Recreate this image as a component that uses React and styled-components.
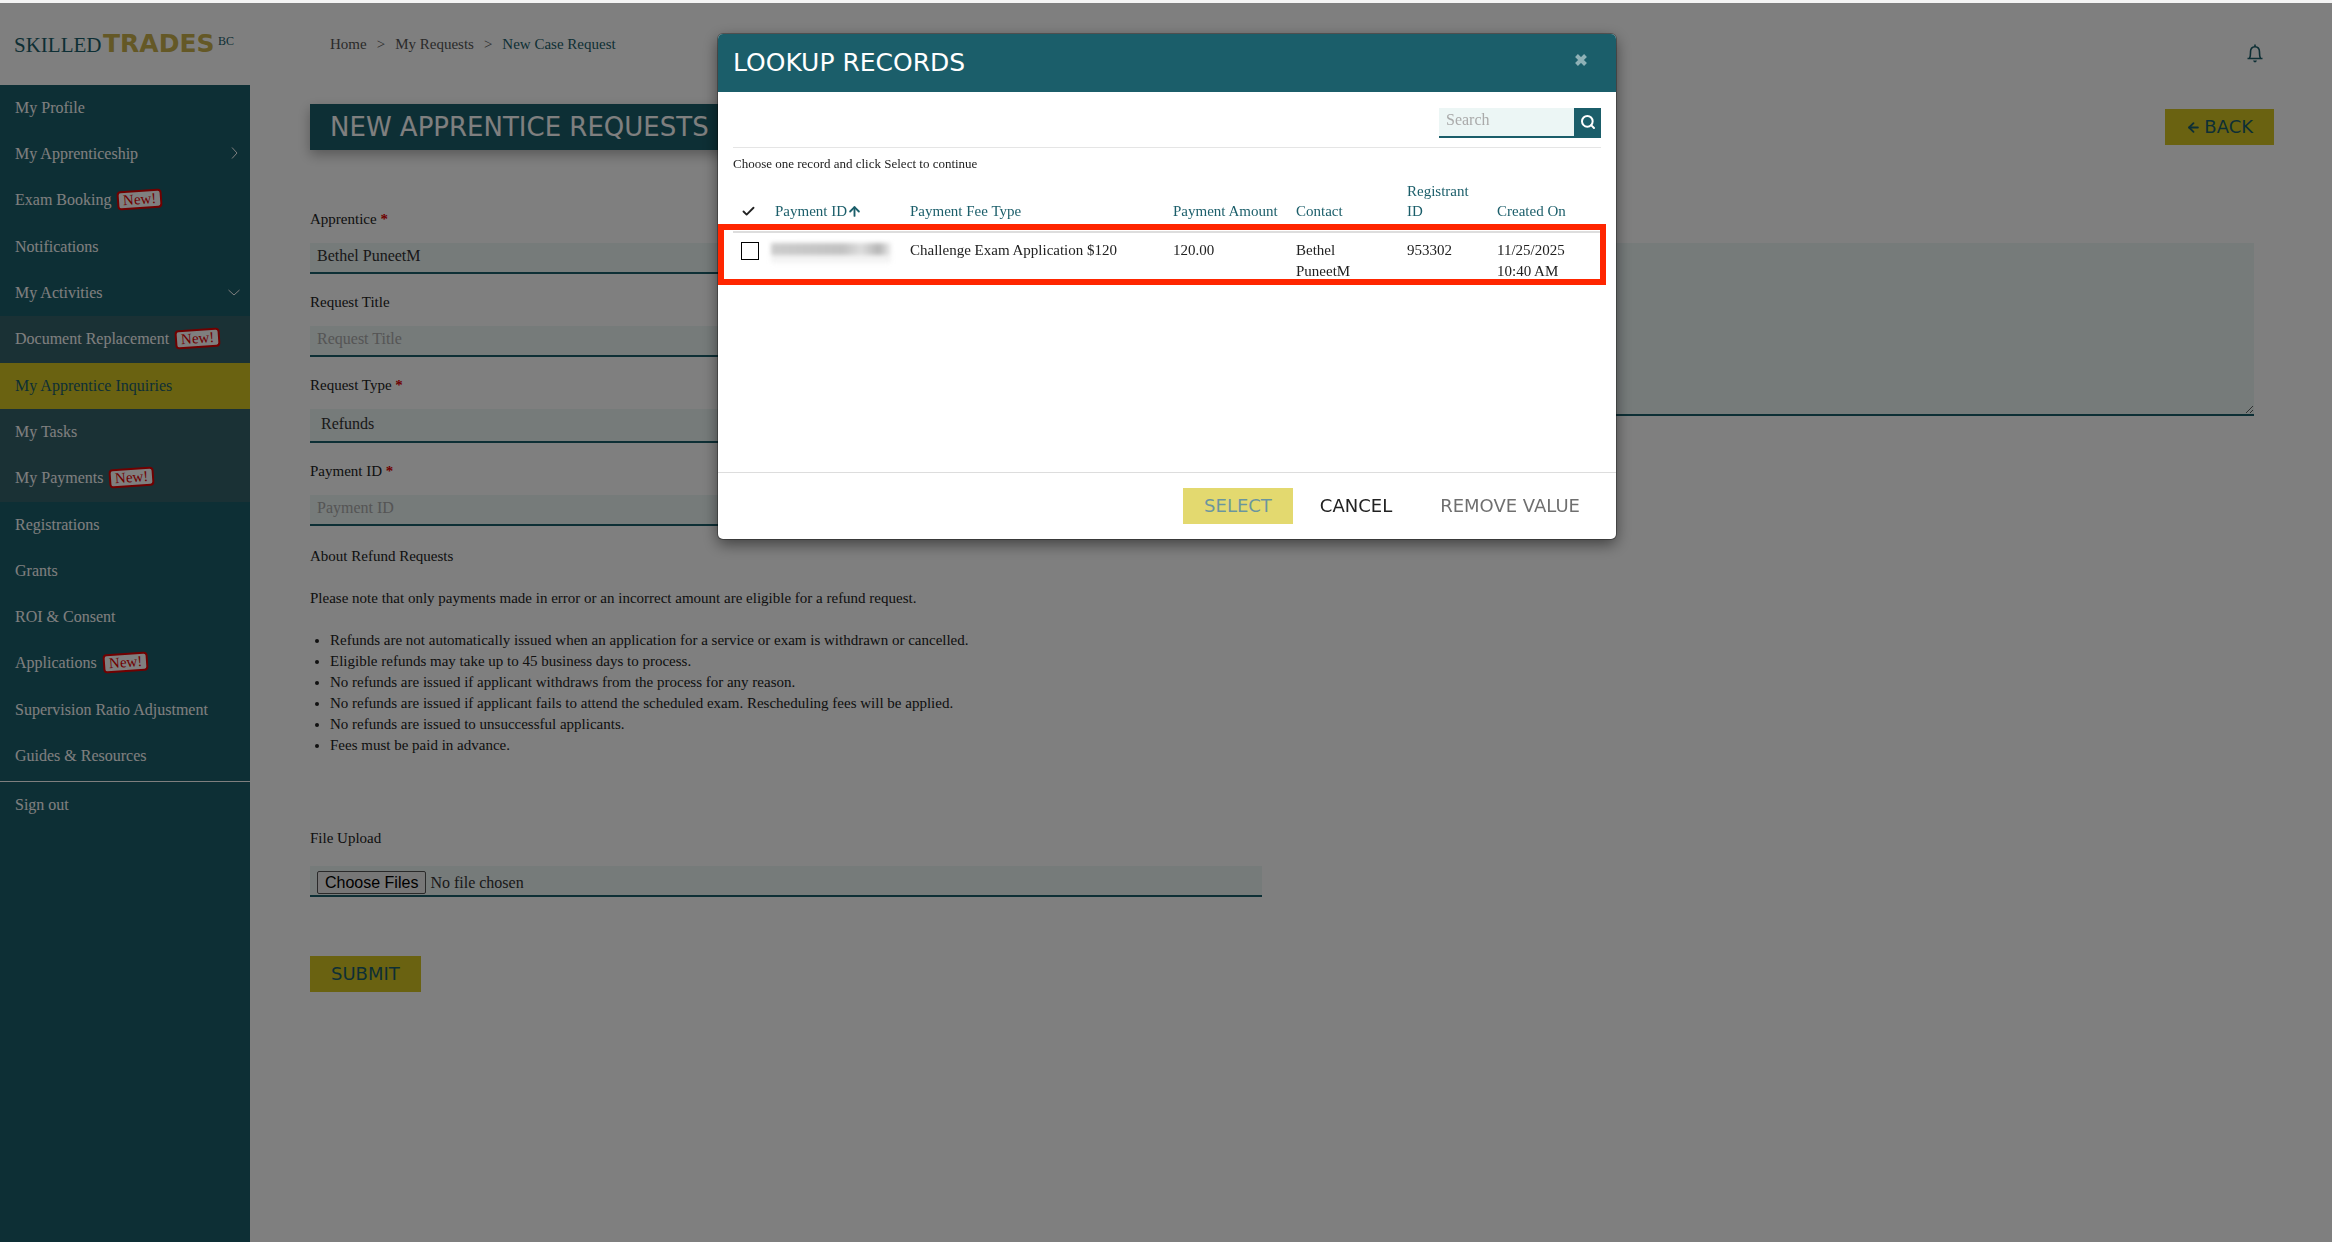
import styled, { createGlobalStyle } from 'styled-components';
import { LuSearch, LuArrowUp, LuArrowLeft, LuCheck } from 'react-icons/lu';

const teal = '#1b5e6a';
const gold = '#d5c523';
const pale = '#ecf6f5';
const serif = '"Liberation Serif", serif';
const wide = '"DejaVu Sans", sans-serif';

const GlobalStyle = createGlobalStyle`
    * { box-sizing: border-box; }
    body {
        margin: 0;
        font-family: ${serif};
        font-size: 16px;
        line-height: 21px;
        color: #222;
        background: #fff;
    }
`

const Page = styled.div`
    min-height: 100vh;
    display: flex;
    border-top: 3px solid #f4f4f4;
`

const Sidebar = styled.aside`
    width: 250px;
    flex: none;
    display: flex;
    flex-direction: column;
`

const LogoLink = styled.a`
    height: 82px;
    padding: 0 14px;
    display: flex;
    align-items: center;
`

const Nav = styled.nav`
    flex: 1;
    background: ${teal};
    display: flex;
    flex-direction: column;
`

const NavLink = styled.a`
    min-height: ${(p) => (p.$tall ? 47 : 46)}px;
    padding: 0 10px 2px 15px;
    display: flex;
    align-items: center;
    color: ${(p) => (p.$active ? teal : '#fff')};
    background: ${(p) => (p.$active ? gold : 'transparent')};
    text-decoration: none;
`

const SubMenu = styled.div`
    background: #34626b;
`

const SignOut = styled.div`
    margin-top: 2px;
    border-top: 1px solid #fff;
`

const Badge = styled.span`
    margin-left: 6px;
    padding: 0 4px;
    line-height: 15px;
    font-size: 15px;
    color: #e00000;
    background: #fff;
    border: 2px solid #e00000;
    border-radius: 4px;
    transform: rotate(-4deg);
`

const Chevron = styled.svg`
    margin-left: auto;
    width: 12px;
    height: 12px;
    fill: none;
    stroke: #fff;
    transform: ${(p) => (p.$down ? 'rotate(90deg)' : 'none')};
`

const Main = styled.main`
    flex: 1;
    padding: 31px 58px 0 60px;
    display: flex;
    flex-direction: column;
`

const TopBar = styled.div`
    display: flex;
    justify-content: space-between;
    align-items: flex-start;
    height: 70px;
    padding: 0 11px 0 20px;
`

const Crumbs = styled.nav`
    display: flex;
    gap: 10px;
    font-size: 15px;
    color: #555;

    a { color: #555; text-decoration: none; }
    a:last-child { color: ${teal}; }
`

const IconButton = styled.button`
    padding: 0;
    margin-top: 10px;
    border: 0;
    background: none;
    color: ${teal};
    display: flex;
`

const TitleRow = styled.div`
    display: flex;
    justify-content: space-between;
    align-items: center;
`

const Title = styled.h1`
    margin: 0;
    width: 952px;
    height: 46px;
    padding: 0 20px;
    font: 400 26px/46px ${wide};
    color: #fff;
    background: ${teal};
    box-shadow: 0 5px 12px rgba(0, 0, 0, 0.3);
`

const Button = styled.button`
    height: 36px;
    padding: 0 21px;
    border: 0;
    display: flex;
    align-items: center;
    gap: 3px;
    font: 400 18px/36px ${wide};
    color: ${(p) => (p.$plain ? '#222' : teal)};
    background: ${(p) => (p.$plain ? 'transparent' : gold)};
    opacity: ${(p) => (p.disabled ? 0.65 : 1)};
`

const Form = styled.form`
    padding: 59px 20px 0 0;
    display: grid;
    grid-template-columns: 952px 1fr;
    column-gap: 40px;
    align-items: start;
`

const Field = styled.div`
    display: flex;
    flex-direction: column;
    gap: ${(p) => p.$gap || 13}px;
    margin-bottom: ${(p) => p.$space || 18}px;
    font-size: 15px;

    label { line-height: 21px; }
    em { color: #e00000; font-style: normal; font-weight: bold; }
`

const Input = styled.input`
    width: 100%;
    height: 31px;
    padding: 0 7px 4px;
    border: 0;
    border-bottom: 2px solid ${teal};
    border-radius: 0;
    background: ${pale};
    font: 16px ${serif};
    color: #333;

    &::placeholder { color: #aaa; opacity: 1; }
    &::file-selector-button {
        margin: 5px 4px 0 0;
        height: 23px;
        padding: 0 7px;
        border: 1px solid #555;
        border-radius: 2px;
        background: #efefef;
        font: 16px "Liberation Sans", sans-serif;
    }
`

const Select = styled.select`
    width: 100%;
    height: 34px;
    padding: 0 11px 4px;
    border: 0;
    border-bottom: 2px solid ${teal};
    border-radius: 0;
    appearance: none;
    background: ${pale};
    font: 16px ${serif};
    color: #333;
`

const TextArea = styled.textarea`
    width: 100%;
    height: 173px;
    border: 0;
    border-bottom: 2px solid ${teal};
    background: ${pale};
    resize: vertical;
`

const Notes = styled.div`
    font-size: 15px;
    margin-bottom: 72px;

    p { margin: 0 0 21px; }
    ul { margin: 0; padding-left: 20px; }
`

const Backdrop = styled.div`
    position: fixed;
    inset: 3px 0 0 0;
    padding: 31px 0 0 2px;
    background: rgba(0, 0, 0, 0.5);
`

const Dialog = styled.section`
    width: 898px;
    max-width: 100%;
    margin: 0 auto;
    overflow: hidden;
    border-radius: 5px;
    background: #fff;
    box-shadow: 0 0 0 1px rgba(0, 0, 0, 0.3), 0 5px 15px rgba(0, 0, 0, 0.5);
`

const DialogHead = styled.header`
    height: 58px;
    padding: 0 28px 0 15px;
    display: flex;
    align-items: center;
    justify-content: space-between;
    background: ${teal};
    color: #fff;

    h2 { margin: 0; font: 400 25px/30px ${wide}; }
    button { margin: 0 0 6px; color: #8fb1b6; }
`

const DialogBody = styled.div`
    height: 381px;
    padding: 16px 15px 0;
    border-bottom: 1px solid #ddd;
`

const SearchRow = styled.div`
    display: flex;
    justify-content: flex-end;
    padding-bottom: 9px;
    border-bottom: 1px solid #e5e5e5;

    input { width: 135px; height: 30px; }
    button {
        width: 27px;
        height: 30px;
        padding: 0 0 2px;
        border: 0;
        background: ${teal};
        color: #fff;
        display: flex;
        align-items: center;
        justify-content: center;
    }
`

const Hint = styled.p`
    margin: 5px 0 6px;
    font-size: 13px;
`

const Table = styled.table`
    width: 100%;
    table-layout: fixed;
    border-collapse: collapse;

    th {
        height: 52px;
        padding: 0 10px 10px 0;
        font-weight: 400;
        font-size: 15px;
        line-height: 20px;
        text-align: left;
        vertical-align: bottom;
        color: ${teal};
        border-bottom: 2px solid #ddd;
    }
    td { padding: 7px 16px 0 0; font-size: 15px; vertical-align: top; }
    th:first-child, td:first-child { padding-left: 8px; }
    th svg { vertical-align: -3px; }
`

const Highlight = styled.div`
    position: absolute;
    top: 190px;
    left: 0;
    right: 10px;
    height: 61px;
    border: 6px solid #ff2600;
    pointer-events: none;
`

const Frame = styled.div`
    position: relative;
`

const RowCheck = styled.input`
    appearance: none;
    width: 18px;
    height: 18px;
    margin: 2px 0 0;
    border: 1px solid #000;
    display: block;
`

const Redacted = styled.span`
    display: block;
    width: 120px;
    height: 12px;
    margin: 3px 0 0 -4px;
    background: linear-gradient(90deg, #ccc, #c2c2c2 60%, #ddd 75%, #b5b5b5 90%, #eee);
    box-shadow: 0 8px 2px #f3f3f3;
    filter: blur(2px);
`

const DialogFoot = styled.footer`
    padding: 15px;
    display: flex;
    justify-content: flex-end;
    gap: 6px;
`

const menu = [
    { text: 'My Profile' },
    { text: 'My Apprenticeship', arrow: 'right' },
    { text: 'Exam Booking', isNew: true },
    { text: 'Notifications' },
    { text: 'My Activities', arrow: 'down' },
]

const activities = [
    { text: 'Document Replacement', isNew: true },
    { text: 'My Apprentice Inquiries', active: true },
    { text: 'My Tasks' },
    { text: 'My Payments', isNew: true },
]

const moreMenu = [
    { text: 'Registrations' },
    { text: 'Grants' },
    { text: 'ROI & Consent' },
    { text: 'Applications', isNew: true },
    { text: 'Supervision Ratio Adjustment' },
    { text: 'Guides & Resources' },
]

const refundRules = [
    'Refunds are not automatically issued when an application for a service or exam is withdrawn or cancelled.',
    'Eligible refunds may take up to 45 business days to process.',
    'No refunds are issued if applicant withdraws from the process for any reason.',
    'No refunds are issued if applicant fails to attend the scheduled exam. Rescheduling fees will be applied.',
    'No refunds are issued to unsuccessful applicants.',
    'Fees must be paid in advance.',
]

const Item = ({ item }) => (
    <NavLink href="#" $active={item.active} $tall={item.isNew}>
        {item.text}
        {item.isNew && <Badge>New!</Badge>}
        {item.arrow && (
            <Chevron viewBox="0 0 12 12" $down={item.arrow === 'down'}><path d="M4 .5l5 5.5-5 5.5" /></Chevron>
        )}
    </NavLink>
)

const Logo = () => (
    <svg width="222" height="28" viewBox="0 0 222 28" role="img" aria-label="Skilled Trades BC">
        <text x="0" y="22" fontFamily="Liberation Serif, serif" fontSize="21" fill={teal}>SKILLED</text>
        <text x="89" y="22" fontFamily="DejaVu Sans, sans-serif" fontWeight="bold" fontSize="25" fill="#c9b04c">TRADES</text>
        <text x="204" y="15" fontFamily="Liberation Serif, serif" fontSize="12" fill={teal}>BC</text>
    </svg>
)

const Bell = () => (
    <svg width="16" height="19" viewBox="0 0 16 19" fill="none" stroke="currentColor" strokeWidth="1.6">
        <path d="M8 .5v2M.5 14.5h15M2.5 14.5C3.6 12.5 3.5 11 3.5 8C3.5 4.5 5.2 2.7 8 2.7S12.5 4.5 12.5 8C12.5 11 12.4 12.5 13.5 14.5" />
        <path d="M6 16.5h4L9 18.2H7z" fill="currentColor" stroke="none" />
    </svg>
)

const Cross = () => (
    <svg width="14" height="14" viewBox="0 0 14 14" stroke="currentColor" strokeWidth="4">
        <path d="M2.5 2.5l9 9M11.5 2.5l-9 9" />
    </svg>
)

const Lookup = () => (
    <Backdrop>
        <Dialog role="dialog" aria-label="Lookup records">
            <Frame>
                <DialogHead>
                    <h2>LOOKUP RECORDS</h2>
                    <IconButton type="button" aria-label="Close"><Cross /></IconButton>
                </DialogHead>
                <DialogBody>
                    <SearchRow>
                        <Input type="text" placeholder="Search" aria-label="Search" />
                        <button type="button" aria-label="Search records"><LuSearch size={16} strokeWidth={3} /></button>
                    </SearchRow>
                    <Hint>Choose one record and click Select to continue</Hint>
                    <Table>
                        <colgroup>
                            <col width="42" />
                            <col width="135" />
                            <col width="263" />
                            <col width="123" />
                            <col width="111" />
                            <col width="90" />
                            <col />
                        </colgroup>
                        <thead>
                            <tr>
                                <th><LuCheck size={15} color="#222" strokeWidth={3} /></th>
                                <th>Payment ID<LuArrowUp size={15} strokeWidth={3} /></th>
                                <th>Payment Fee Type</th>
                                <th>Payment Amount</th>
                                <th>Contact</th>
                                <th>Registrant ID</th>
                                <th>Created On</th>
                            </tr>
                        </thead>
                        <tbody>
                            <tr>
                                <td><RowCheck type="checkbox" aria-label="Select record" /></td>
                                <td><Redacted /></td>
                                <td>Challenge Exam Application $120</td>
                                <td>120.00</td>
                                <td>Bethel PuneetM</td>
                                <td>953302</td>
                                <td>11/25/2025 10:40 AM</td>
                            </tr>
                        </tbody>
                    </Table>
                </DialogBody>
                <DialogFoot>
                    <Button type="button" disabled>SELECT</Button>
                    <Button type="button" $plain>CANCEL</Button>
                    <Button type="button" $plain disabled>REMOVE VALUE</Button>
                </DialogFoot>
                <Highlight />
            </Frame>
        </Dialog>
    </Backdrop>
)

const App = () => {
    return (
        <>
            <GlobalStyle />
            <Page>
                <Sidebar>
                    <LogoLink href="#"><Logo /></LogoLink>
                    <Nav>
                        {menu.map((item) => <Item key={item.text} item={item} />)}
                        <SubMenu>
                            {activities.map((item) => <Item key={item.text} item={item} />)}
                        </SubMenu>
                        {moreMenu.map((item) => <Item key={item.text} item={item} />)}
                        <SignOut><Item item={{ text: 'Sign out' }} /></SignOut>
                    </Nav>
                </Sidebar>
                <Main>
                    <TopBar>
                        <Crumbs>
                            <a href="#">Home</a>
                            <span>&gt;</span>
                            <a href="#">My Requests</a>
                            <span>&gt;</span>
                            <a href="#">New Case Request</a>
                        </Crumbs>
                        <IconButton type="button" aria-label="Notifications"><Bell /></IconButton>
                    </TopBar>
                    <TitleRow>
                        <Title>NEW APPRENTICE REQUESTS</Title>
                        <Button type="button"><LuArrowLeft size={15} strokeWidth={3} />BACK</Button>
                    </TitleRow>
                    <Form onSubmit={(e) => e.preventDefault()}>
                        <div>
                            <Field>
                                <label htmlFor="apprentice">Apprentice <em>*</em></label>
                                <Input id="apprentice" defaultValue="Bethel PuneetM" />
                            </Field>
                            <Field>
                                <label htmlFor="title">Request Title</label>
                                <Input id="title" placeholder="Request Title" />
                            </Field>
                            <Field>
                                <label htmlFor="type">Request Type <em>*</em></label>
                                <Select id="type" defaultValue="Refunds"><option>Refunds</option></Select>
                            </Field>
                            <Field $space={20}>
                                <label htmlFor="payment">Payment ID <em>*</em></label>
                                <Input id="payment" placeholder="Payment ID" />
                            </Field>
                            <Notes>
                                <p>About Refund Requests</p>
                                <p>Please note that only payments made in error or an incorrect amount are eligible for a refund request.</p>
                                <ul>{refundRules.map((rule) => <li key={rule}>{rule}</li>)}</ul>
                            </Notes>
                            <Field $gap={17} $space={59}>
                                <label htmlFor="files">File Upload</label>
                                <Input id="files" type="file" multiple />
                            </Field>
                            <Button type="submit">SUBMIT</Button>
                        </div>
                        <Field>
                            <label htmlFor="description">Description</label>
                            <TextArea id="description" />
                        </Field>
                    </Form>
                </Main>
            </Page>
            <Lookup />
        </>
    )
}

export default App;
